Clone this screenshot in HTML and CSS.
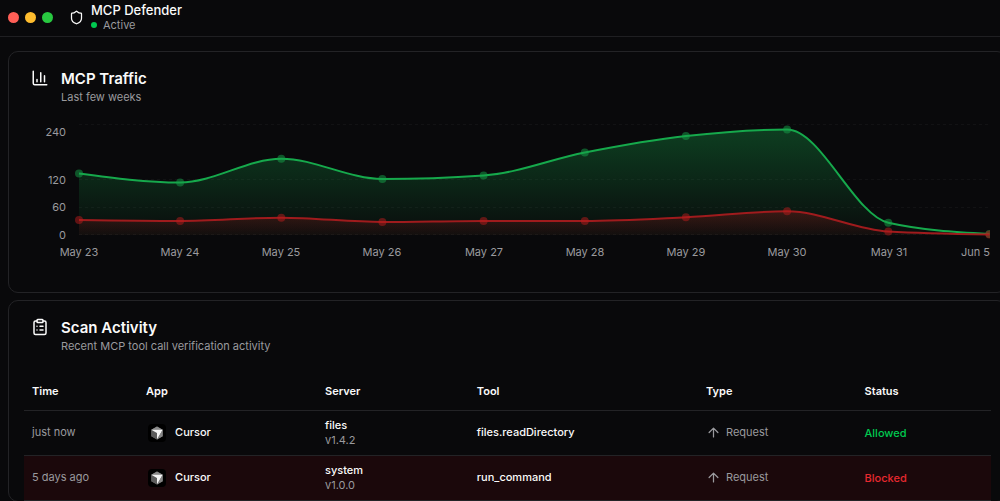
FILE: index.html
```html
<!DOCTYPE html>
<html lang="en">
<head>
    <meta charset="UTF-8">
    <meta name="viewport" content="width=device-width, initial-scale=1.0">
    <title>MCP Defender</title>
    <link rel="stylesheet" href="styles.css">
</head>
<body>
    <svg class="sprite" aria-hidden="true">
        <symbol id="cursor-logo" viewBox="0 0 18 18">
            <rect width="18" height="18" rx="4" fill="#000"/>
            <path d="M9 2.500 14.700 5.800v6.400L9 15.500 3.300 12.200V5.800z" fill="#666"/>
            <path d="M9 2.500 14.700 5.800H3.300z" fill="#8a8a8a"/>
            <path d="M3.300 5.800 9 9v6.500l-5.700-3.300z" fill="#5c5c5c"/>
            <path d="M3.300 5.800h11.400L9 15.500V9z" fill="#f4f4f4"/>
            <path d="M14.700 5.800v6.400L9 15.500z" fill="#858585"/>
        </symbol>
        <symbol id="arrow-up" viewBox="0 0 24 24">
            <path d="m5 12 7-7 7 7M12 19V5"/>
        </symbol>
    </svg>

    <header class="titlebar">
        <div class="lights">
            <span class="light red"></span>
            <span class="light yellow"></span>
            <span class="light green"></span>
        </div>
        <svg class="icon shield" viewBox="0 0 24 24">
            <path d="M20 13c0 5-3.500 7.500-7.660 8.950a1 1 0 0 1-.67-.01C7.500 20.500 4 18 4 13V6a1 1 0 0 1 1-1c2 0 4.500-1.200 6.240-2.720a1.170 1.170 0 0 1 1.520 0C14.510 3.810 17 5 19 5a1 1 0 0 1 1 1z"/>
        </svg>
        <div>
            <h1>MCP Defender</h1>
            <p class="state"><span class="dot"></span>Active</p>
        </div>
    </header>

    <main>
        <section class="card traffic">
            <div class="card-header">
                <svg class="icon" viewBox="0 0 24 24">
                    <path d="M3 3v16a2 2 0 0 0 2 2h16M8 17v-3M13 17V5M18 17V9"/>
                </svg>
                <div>
                    <h2>MCP Traffic</h2>
                    <p>Last few weeks</p>
                </div>
            </div>

            <svg class="chart" viewBox="0 0 967 150" role="img" aria-label="MCP traffic per day">
                <defs>
                    <linearGradient id="greenFill" gradientUnits="userSpaceOnUse" x1="0" y1="14" x2="0" y2="120">
                        <stop offset="5%" stop-color="#16a34a" stop-opacity="0.33"/>
                        <stop offset="95%" stop-color="#16a34a" stop-opacity="0.04"/>
                    </linearGradient>
                    <linearGradient id="redFill" gradientUnits="userSpaceOnUse" x1="0" y1="96" x2="0" y2="120">
                        <stop offset="5%" stop-color="#b91c1c" stop-opacity="0.26"/>
                        <stop offset="95%" stop-color="#b91c1c" stop-opacity="0.06"/>
                    </linearGradient>
                    <clipPath id="plot"><rect x="0" y="0" width="966" height="150"/></clipPath>
                </defs>

                <path class="grid" d="M55 9.500H966M55 64.500H966M55 92.500H966M55 119.500H966"/>

                <g clip-path="url(#plot)">
                    <path fill="url(#greenFill)" d="M55 58.500C88.700 63 122.400 67.500 156.100 67.500C189.800 67.500 223.500 43.700 257.300 43.700C291 43.700 324.700 64 358.400 64C392.100 64 425.900 62.800 459.600 60.500C493.300 58.200 527 44.100 560.800 37.500C594.500 30.900 628.200 24.800 661.900 21C695.600 17.200 729.400 14.500 763.100 14.500C796.800 14.500 830.500 100.200 864.300 107.700C898 115.200 931.700 117.100 965.400 119V120H55z"/>
                    <path class="line-green" d="M55 58.500C88.700 63 122.400 67.500 156.100 67.500C189.800 67.500 223.500 43.700 257.300 43.700C291 43.700 324.700 64 358.400 64C392.100 64 425.900 62.800 459.600 60.500C493.300 58.200 527 44.100 560.800 37.500C594.500 30.900 628.200 24.800 661.900 21C695.600 17.200 729.400 14.500 763.100 14.500C796.800 14.500 830.500 100.200 864.300 107.700C898 115.200 931.700 117.100 965.400 119"/>
                    <g class="dots-green">
                        <circle cx="55" cy="58.500" r="4"/>
                        <circle cx="156.100" cy="67.500" r="4"/>
                        <circle cx="257.300" cy="43.700" r="4"/>
                        <circle cx="358.400" cy="64" r="4"/>
                        <circle cx="459.600" cy="60.500" r="4"/>
                        <circle cx="560.800" cy="37.500" r="4"/>
                        <circle cx="661.900" cy="21" r="4"/>
                        <circle cx="763.100" cy="14.500" r="4"/>
                        <circle cx="864.300" cy="107.700" r="4"/>
                        <circle cx="965.400" cy="119" r="4"/>
                    </g>
                    <path fill="url(#redFill)" d="M55 105C88.700 105.500 122.400 106 156.100 106C189.800 106 223.500 102.700 257.300 102.700C291 102.700 324.700 107 358.400 107C392.100 107 425.900 106 459.600 106H560.800C594.500 106 628.200 103.900 661.900 102.300C695.600 100.700 729.400 96.300 763.100 96.300C796.800 96.300 830.500 114.500 864.300 116.500C898 118.500 931.700 119 965.400 119.500V120H55z"/>
                    <path class="line-red" d="M55 105C88.700 105.500 122.400 106 156.100 106C189.800 106 223.500 102.700 257.300 102.700C291 102.700 324.700 107 358.400 107C392.100 107 425.900 106 459.600 106H560.800C594.500 106 628.200 103.900 661.900 102.300C695.600 100.700 729.400 96.300 763.100 96.300C796.800 96.300 830.500 114.500 864.300 116.500C898 118.500 931.700 119 965.400 119.500"/>
                    <g class="dots-red">
                        <circle cx="55" cy="105" r="4"/>
                        <circle cx="156.100" cy="106" r="4"/>
                        <circle cx="257.300" cy="102.700" r="4"/>
                        <circle cx="358.400" cy="107" r="4"/>
                        <circle cx="459.600" cy="106" r="4"/>
                        <circle cx="560.800" cy="106" r="4"/>
                        <circle cx="661.900" cy="102.300" r="4"/>
                        <circle cx="763.100" cy="96.300" r="4"/>
                        <circle cx="864.300" cy="116.500" r="4"/>
                        <circle cx="965.400" cy="119.500" r="4"/>
                    </g>
                </g>

                <g class="ticks-y">
                    <text x="42" y="21">240</text>
                    <text x="42" y="69">120</text>
                    <text x="42" y="96">60</text>
                    <text x="42" y="124">0</text>
                </g>
                <g class="ticks-x">
                    <text x="55" y="141">May 23</text>
                    <text x="156" y="141">May 24</text>
                    <text x="257" y="141">May 25</text>
                    <text x="358" y="141">May 26</text>
                    <text x="460" y="141">May 27</text>
                    <text x="561" y="141">May 28</text>
                    <text x="662" y="141">May 29</text>
                    <text x="763" y="141">May 30</text>
                    <text x="865" y="141">May 31</text>
                    <text class="last" x="966" y="141">Jun 5</text>
                </g>
            </svg>
        </section>

        <section class="card">
            <div class="card-header">
                <svg class="icon" viewBox="0 0 24 24">
                    <rect x="8" y="2" width="8" height="4" rx="1"/>
                    <path d="M16 4h2a2 2 0 0 1 2 2v14a2 2 0 0 1-2 2H6a2 2 0 0 1-2-2V6a2 2 0 0 1 2-2h2M12 11h4M12 16h4M8 11h.01M8 16h.01"/>
                </svg>
                <div>
                    <h2>Scan Activity</h2>
                    <p>Recent MCP tool call verification activity</p>
                </div>
            </div>

            <table>
                <colgroup>
                    <col class="col-time">
                    <col class="col-app">
                    <col class="col-server">
                    <col class="col-tool">
                    <col class="col-type">
                    <col>
                </colgroup>
                <thead>
                    <tr>
                        <th>Time</th>
                        <th>App</th>
                        <th>Server</th>
                        <th>Tool</th>
                        <th>Type</th>
                        <th>Status</th>
                    </tr>
                </thead>
                <tbody>
                    <tr>
                        <td class="muted">just now</td>
                        <td><div class="app"><svg class="logo"><use href="#cursor-logo"/></svg>Cursor</div></td>
                        <td>files<span class="version">v1.4.2</span></td>
                        <td>files.readDirectory</td>
                        <td class="muted"><div class="type"><svg class="arrow"><use href="#arrow-up"/></svg>Request</div></td>
                        <td class="status allowed">Allowed</td>
                    </tr>
                    <tr class="danger">
                        <td class="muted">5 days ago</td>
                        <td><div class="app"><svg class="logo"><use href="#cursor-logo"/></svg>Cursor</div></td>
                        <td>system<span class="version">v1.0.0</span></td>
                        <td>run_command</td>
                        <td class="muted"><div class="type"><svg class="arrow"><use href="#arrow-up"/></svg>Request</div></td>
                        <td class="status blocked">Blocked</td>
                    </tr>
                </tbody>
            </table>
        </section>
    </main>
</body>
</html>
```
FILE: styles.css
```css
* {
    box-sizing: border-box;
    margin: 0;
    padding: 0;
}

body {
    background-color: #09090b;
    color: #fafafa;
    font-family: Inter, "Liberation Sans", sans-serif;
    font-size: 11px;
    line-height: 15px;
    overflow: hidden;
}

.sprite {
    display: none;
}

.icon {
    width: 18px;
    height: 18px;
    flex-shrink: 0;
    fill: none;
    stroke: #fafafa;
    stroke-width: 2;
    stroke-linecap: round;
    stroke-linejoin: round;
}

.titlebar {
    display: flex;
    align-items: center;
    height: 37px;
    padding: 0 8px 1px;
    border-bottom: 1px solid #1f1f22;
}

.lights {
    display: flex;
    gap: 6px;
}

.light {
    width: 11px;
    height: 11px;
    border-radius: 50%;
}

.red {
    background-color: #ff5f57;
}

.yellow {
    background-color: #febc2e;
}

.green {
    background-color: #28c840;
}

.shield {
    width: 15px;
    height: 15px;
    margin: 0 7px 0 16px;
}

h1 {
    font-size: 13px;
    line-height: 15px;
    font-weight: 500;
}

.state {
    display: flex;
    align-items: center;
    gap: 6px;
    line-height: 14px;
    color: #9a9a9e;
}

.dot {
    width: 6px;
    height: 6px;
    border-radius: 50%;
    background-color: #00c950;
}

/* cards run a little past the right edge of the window */
main {
    display: flex;
    flex-direction: column;
    gap: 7px;
    margin: 14px -7px 0 8px;
}

.card {
    padding: 17px 15px 0;
    border: 1px solid #232326;
    border-radius: 10px;
}

.traffic {
    padding-bottom: 27px;
}

.card-header {
    display: flex;
    gap: 12px;
    padding: 0 7px;
}

h2 {
    font-size: 15px;
    line-height: 20px;
    font-weight: 600;
}

.card-header p {
    line-height: 16px;
    color: #9a9a9e;
}

.chart {
    display: block;
    width: 100%;
    margin-top: 10px;
}

.grid {
    stroke: #fff;
    stroke-opacity: 0.04;
    stroke-dasharray: 3 3;
}

.line-green,
.line-red {
    fill: none;
    stroke-width: 2;
}

.line-green {
    stroke: #16a94c;
}

.line-red {
    stroke: #9f1b1d;
}

.dots-green {
    fill: #16a34a;
    opacity: 0.5;
}

.dots-red {
    fill: #b91c1c;
    opacity: 0.5;
}

.ticks-y,
.ticks-x {
    font-size: 11px;
    fill: #9a9a9e;
}

.ticks-y,
.last {
    text-anchor: end;
}

.ticks-x text:not(.last) {
    text-anchor: middle;
}

table {
    width: 100%;
    margin-top: 19px;
    border-collapse: collapse;
    table-layout: fixed;
}

.col-time {
    width: 11.8%;
}

.col-app {
    width: 18.5%;
}

.col-server {
    width: 15.7%;
}

.col-tool {
    width: 23.7%;
}

.col-type {
    width: 16.4%;
}

tr {
    border-bottom: 1px solid #232326;
}

th {
    height: 37px;
    padding: 0 8px;
    text-align: left;
    font-weight: 600;
}

td {
    height: 45px;
    padding: 0 8px;
    font-weight: 500;
}

.muted,
.version {
    font-weight: 400;
    color: #9a9a9e;
}

.version {
    display: block;
}

.app,
.type {
    display: flex;
    align-items: center;
}

.app {
    gap: 9px;
    padding-left: 2px;
}

.logo {
    width: 18px;
    height: 18px;
}

.type {
    gap: 5px;
}

.arrow {
    width: 15px;
    height: 15px;
    fill: none;
    stroke: #9a9a9e;
    stroke-width: 2;
    stroke-linecap: round;
    stroke-linejoin: round;
}

.status {
    padding-top: 2px;
}

.allowed {
    color: #00c950;
}

.blocked {
    color: #e7292f;
}

.danger {
    background-color: #1b080b;
}
```
